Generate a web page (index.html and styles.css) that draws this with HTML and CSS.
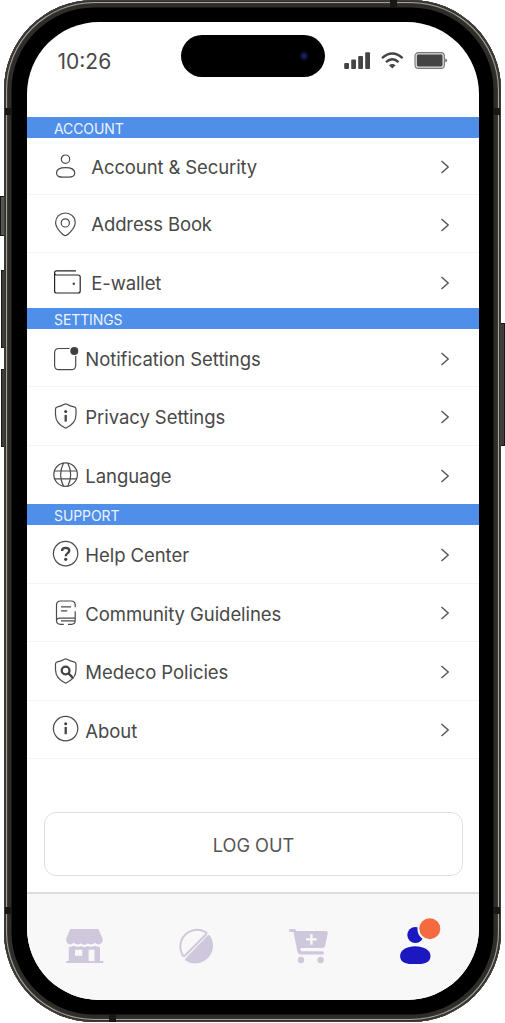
FILE: index.html
```html
<!DOCTYPE html>
<html lang="en">
<head>
<meta charset="utf-8">
<title>Settings</title>
<link rel="stylesheet" href="styles.css">
</head>
<body>
<div class="phone">
  <span class="key key-mute"></span>
  <span class="key key-up"></span>
  <span class="key key-down"></span>
  <span class="key key-power"></span>
  <div class="frame">
    <span class="band band-left-top"></span>
    <span class="band band-right-top"></span>
    <span class="band band-left-bottom"></span>
    <span class="band band-right-bottom"></span>
    <span class="band band-top"></span>
    <span class="band band-bottom"></span>
    <main class="screen">
      <header class="status">
        <span class="time">10:26</span>
        <span class="island"><span class="camera"></span></span>
        <svg class="signals" width="104" height="20" viewBox="0 0 104 20">
          <g fill="#444">
            <rect x="0.2" y="13" width="4.8" height="6" rx="1"/>
            <rect x="7.2" y="9.5" width="4.8" height="9.5" rx="1"/>
            <rect x="14.2" y="6" width="4.8" height="13" rx="1"/>
            <rect x="21.2" y="2.2" width="4.8" height="16.8" rx="1"/>
          </g>
          <g fill="none" stroke="#444" stroke-width="2.3">
            <path d="M38 8.2Q48.3-1.2 58.6 8.2"/>
            <path d="M42 12.2Q48.3 6.3 54.6 12.2"/>
          </g>
          <path fill="#444" d="M45 15.3Q48.3 12.6 51.6 15.3L48.3 18.6Z"/>
          <rect x="71" y="2.6" width="29.4" height="15.8" rx="3.4" fill="#dcdcdc" stroke="#777" stroke-width="1.1"/>
          <rect x="72.9" y="4.5" width="25.6" height="12" rx="1.4" fill="#444"/>
          <path fill="#666" d="M101.3 8.6Q103.1 9.2 103.1 10.6Q103.1 12 101.3 12.6Z"/>
        </svg>
      </header>

      <section class="group group-account">
        <h2 class="title">ACCOUNT</h2>
        <div class="row">
          <svg class="icon" viewBox="0 0 30 30"><circle cx="14.5" cy="8.2" r="4.2"/><path d="M14.6 16.7C19.5 16.7 23.8 18.2 23.8 22C23.8 25.4 20.8 26.2 17.5 26.2H11.8C8.5 26.2 5.5 25.4 5.5 22C5.5 18.2 9.8 16.7 14.6 16.7Z"/></svg>
          <span class="label">Account &amp; Security</span>
          <svg class="chevron" viewBox="0 0 10 14"><path d="M1.5 1L8.2 7L1.5 13"/></svg>
        </div>
        <div class="row">
          <svg class="icon" viewBox="0 0 30 30"><path d="M14.3 26.6C12.6 26.6 4.6 19.5 4.6 13.4C4.6 8 9 4 14.3 4S24.2 8 24.2 13.4C24.2 19.5 16 26.6 14.3 26.6Z"/><circle cx="14.3" cy="13.9" r="4.1"/></svg>
          <span class="label">Address Book</span>
          <svg class="chevron" viewBox="0 0 10 14"><path d="M1.5 1L8.2 7L1.5 13"/></svg>
        </div>
        <div class="row row-wallet">
          <svg class="icon icon-dark" viewBox="0 0 30 30"><path d="M25 4.9H5.5Q3.6 4.9 3.6 6.9T5.5 9H27Q29.2 9 29.2 11V25Q29.2 27 27 27H5.5Q3.6 27 3.6 25V6.9"/><circle class="solid" cx="22.8" cy="17.8" r="1.2"/></svg>
          <span class="label">E-wallet</span>
          <svg class="chevron" viewBox="0 0 10 14"><path d="M1.5 1L8.2 7L1.5 13"/></svg>
        </div>
      </section>

      <section class="group group-settings">
        <h2 class="title">SETTINGS</h2>
        <div class="row">
          <svg class="icon" viewBox="0 0 30 30"><path d="M18.5 5.5H8Q3.6 5.5 3.6 10V22.2Q3.6 26.7 8 26.7H20.3Q24.7 26.7 24.7 22.2V13"/><circle class="solid" cx="23.3" cy="8" r="4"/></svg>
          <span class="label">Notification Settings</span>
          <svg class="chevron" viewBox="0 0 10 14"><path d="M1.5 1L8.2 7L1.5 13"/></svg>
        </div>
        <div class="row">
          <svg class="icon" viewBox="0 0 30 30"><path d="M14.7 2.9Q15.3 2.9 16 3.3Q19.3 5.3 23 5.9Q25 6.3 25 8.3V13.6C25 20.5 21 24.5 14.7 27.2C8.4 24.5 4.5 20.5 4.5 13.6V8.3Q4.5 6.3 6.5 5.9Q10.1 5.3 13.4 3.3Q14.1 2.9 14.7 2.9Z"/><path class="bold" d="M14.7 13.9V20.6"/><circle class="solid" cx="14.7" cy="10.4" r="1.5"/></svg>
          <span class="label">Privacy Settings</span>
          <svg class="chevron" viewBox="0 0 10 14"><path d="M1.5 1L8.2 7L1.5 13"/></svg>
        </div>
        <div class="row">
          <svg class="icon" viewBox="0 0 30 30"><circle cx="14.6" cy="14.6" r="11.8"/><path d="M3.3 11H26M3.3 18.8H26M12.5 2.9Q6.8 14.6 12.5 26.3M16.8 2.9Q22.5 14.6 16.8 26.3"/></svg>
          <span class="label">Language</span>
          <svg class="chevron" viewBox="0 0 10 14"><path d="M1.5 1L8.2 7L1.5 13"/></svg>
        </div>
      </section>

      <section class="group group-support">
        <h2 class="title">SUPPORT</h2>
        <div class="row">
          <svg class="icon" viewBox="0 0 30 30"><circle cx="14.6" cy="14.6" r="12.2"/><path class="bold" d="M11 12C11 9.8 12.5 8.8 14.7 8.8S18.3 10 18.3 11.8C18.3 14.2 14.7 14 14.7 17.2"/><circle class="solid" cx="14.7" cy="20.3" r="1.6"/></svg>
          <span class="label">Help Center</span>
          <svg class="chevron" viewBox="0 0 10 14"><path d="M1.5 1L8.2 7L1.5 13"/></svg>
        </div>
        <div class="row">
          <svg class="icon" viewBox="0 0 30 30"><path d="M24.2 10.3V8Q24.2 4 20 4H9.7Q5.5 4 5.5 8V23.5Q5.5 27.3 9.5 27.3H12.8M24.2 14.3V21.2H8.8Q5.5 21.2 5.5 24M24.2 21.2V23.5Q24.2 27.3 20.5 27.3H17M10 23.9H23.5M10 9.8H20M10 13.8H16.3"/></svg>
          <span class="label">Community Guidelines</span>
          <svg class="chevron" viewBox="0 0 10 14"><path d="M1.5 1L8.2 7L1.5 13"/></svg>
        </div>
        <div class="row">
          <svg class="icon" viewBox="0 0 30 30"><path d="M22.2 21.9Q19.5 25 14.7 27.2C8.4 24.5 4.5 20.5 4.5 13.6V8.3Q4.5 6.3 6.5 5.9Q10.1 5.3 13.4 3.3Q14.7 2.5 16 3.3Q19.3 5.3 23 5.9Q25 6.3 25 8.3V13.6Q25 17.8 23.2 20.6"/><circle class="bold" cx="14.6" cy="14.5" r="3.9"/><path class="bold" d="M17.5 17.4L22.4 22.4"/></svg>
          <span class="label">Medeco Policies</span>
          <svg class="chevron" viewBox="0 0 10 14"><path d="M1.5 1L8.2 7L1.5 13"/></svg>
        </div>
        <div class="row">
          <svg class="icon" viewBox="0 0 30 30"><circle cx="14.6" cy="14.6" r="12.2"/><path class="bold" d="M14.7 12.9V20.2"/><circle class="solid" cx="14.7" cy="9.7" r="1.5"/></svg>
          <span class="label">About</span>
          <svg class="chevron" viewBox="0 0 10 14"><path d="M1.5 1L8.2 7L1.5 13"/></svg>
        </div>
      </section>

      <button class="logout">LOG OUT</button>

      <nav class="tabs">
        <svg class="tab" viewBox="0 0 44 44"><path d="M8.2 6H34.2Q35.3 6 35.8 7L39.5 15.3Q40.4 17.5 38.8 19.8Q35.3 23 32 19.8Q28.3 23 24.9 20.2Q21.4 23.3 17.9 20.2Q14.4 23 10.8 19.8Q7 23 4 19.8Q2.6 17.5 3.4 15.3L6.7 7Q7.2 6 8.2 6Z"/><path fill-rule="evenodd" d="M5.8 24Q8.6 24 10.8 22.8Q14.4 24.8 17.9 23Q21.4 25 24.9 23Q28.3 24.8 32 22.8Q34.5 24 37 24V38H40.3V40H3.2V38H5.8ZM12 26.7V32.8H19.3V26.7ZM25.6 26.7V38H31.5V26.7Z"/></svg>
        <svg class="tab" viewBox="0 0 44 44"><path class="outline" d="M9.8 32.4A16.8 16.8 0 0 1 32.6 9.1Q34 10.4 33 11.5L12 32.5Q10.8 33.6 9.8 32.4Z"/><path d="M36.8 12.4A17.8 17.8 0 0 1 12.3 37.4Q11.4 36.3 12.6 35.2L34.2 13Q35.8 11.4 36.8 12.4Z"/></svg>
        <svg class="tab" viewBox="0 0 44 44"><path fill-rule="evenodd" d="M7 6H11Q13 6 13.4 8H43Q45 8 44.8 10.2L42.2 22.2Q41.7 25 38.8 25H17.6Q16.5 26.8 18.5 28.3H39.6Q41 28.3 41 29.9T39.6 31.5H18.2Q15 31.5 14.4 28.5L10.5 9H7.5Q6 9 6 7.5T7 6ZM27.2 11.3V15.2H23V17.6H27.2V21.8H29.6V17.6H33.8V15.2H29.6V11.3Z"/><circle cx="18" cy="37" r="3.2"/><circle cx="37.6" cy="37" r="3.2"/></svg>
        <svg class="tab tab-active" viewBox="0 0 44 44"><circle cx="22.4" cy="12" r="8.1"/><path d="M22.2 23.2C30 23.2 37.5 26.6 37.5 33C37.5 39.2 32 41 26.2 41H18.2C12.5 41 7.1 39.2 7.1 33C7.1 26.6 14.2 23.2 22.2 23.2Z"/><circle cx="36.8" cy="5.7" r="12.4" fill="#f8f8f8"/><circle cx="36.8" cy="5.7" r="10.5" fill="#f56b3f"/></svg>
      </nav>
    </main>
  </div>
</div>
</body>
</html>
```
FILE: styles.css
```css
* { box-sizing: border-box; }
body {
  margin: 0;
  background: #fff;
  font-family: Inter, "Liberation Sans", sans-serif;
  color: #484848;
}
.phone { position: relative; width: 505px; height: 1023px; overflow: hidden; padding-left: 4px; }
.frame {
  position: relative;
  width: 497px;
  height: 1022px;
  padding: 22px 22.5px 22px 23px;
  border-radius: 90px;
  background: #000;
  box-shadow:
    inset 0 0 0 1px #3c3c3a,
    inset 0 0 0 2px #33322f,
    inset 0 0 0 3px #a7a198,
    inset 0 0 0 3.6px #45433f,
    inset 0 0 0 7.5px #2d2d2a;
}
/* side keys sit against the edges of the case */
.key { position: absolute; background: #3c3e3b; border: 1px solid #161716; }
.key-mute { left: 0; top: 196px; width: 6px; height: 40px; background: #555754; }
.key-up { left: 1px; top: 270px; width: 5px; height: 78px; }
.key-down { left: 1px; top: 369px; width: 5px; height: 78px; }
.key-power { left: 500px; top: 323px; width: 5px; height: 123px; }
.band { position: absolute; width: 7px; height: 7px; background: #181715; }
.band-left-top { left: 1px; top: 108px; }
.band-right-top { right: 1px; top: 108px; }
.band-left-bottom { left: 1px; top: 907px; }
.band-right-bottom { right: 1px; top: 907px; }
.band-top { left: 385.5px; top: 0; }
.band-bottom { left: 105px; bottom: 0; }
.screen {
  display: flex;
  flex-direction: column;
  height: 978px;
  overflow: hidden;
  border-radius: 72px;
  background: #fff;
}
.status { display: flex; height: 95.3px; padding: 13px 0 0 30.5px; flex: none; }
.time { width: 123.5px; padding-top: 14px; font-size: 21px; line-height: 26px; }
.island {
  display: flex;
  align-items: center;
  justify-content: flex-end;
  width: 144px;
  height: 42px;
  padding-right: 16px;
  border-radius: 21px;
  background: #000;
}
.camera { width: 10px; height: 10px; border-radius: 50%; background: radial-gradient(#23236c 0 12%, #0b0b2b 45%, #05050c 75%); }
.signals { margin: 15px 0 0 18.5px; }
.group { flex: none; }
.title {
  height: 20.7px;
  margin: 0;
  padding-left: 27px;
  background: #4f8ee9;
  color: #edf4ff;
  font-size: 14px;
  font-weight: 400;
  letter-spacing: -0.1px;
  line-height: 23px;
}
.row {
  display: flex;
  align-items: center;
  height: 58.5px;
  padding: 0 29px 0 24px;
  border-bottom: 1.5px solid #f3f3f3;
}
.icon, .chevron { flex: none; fill: none; stroke: #4b4b4b; stroke-width: 1.2; }
.icon { width: 30px; height: 30px; }
.icon-dark { stroke: #242424; }
.icon .solid { fill: #3f3f3f; stroke: none; }
.icon .bold { stroke: #444; stroke-width: 2.3; }
.chevron { width: 10px; height: 14px; margin-top: 2px; stroke: #555; stroke-width: 1.4; }
.label {
  flex: 1;
  padding: 2px 0 0 4.3px;
  font-size: 18.5px;
  letter-spacing: -0.06px;
  line-height: 24px;
  white-space: nowrap;
}
.group-support .label { padding-top: 3px; }
.group-account .row { height: 57.5px; }
.group-account .label { padding-left: 10.3px; padding-top: 1px; letter-spacing: -0.12px; }
.group-account .row-wallet { height: 55.3px; border: 0; }
.group-account .row-wallet .label { padding-top: 5px; }
.row-wallet .chevron { margin-top: 5px; }
.group-settings .row:last-child { border: 0; }
.logout {
  flex: none;
  width: 419px;
  height: 64px;
  margin: 53px 0 0 17px;
  padding: 1px 0 0;
  border: 1.5px solid #dfdfdf;
  border-radius: 12px;
  background: #fff;
  color: #555;
  font: 18.2px Inter, "Liberation Sans", sans-serif;
}
.tabs {
  display: flex;
  justify-content: space-between;
  flex: 1;
  margin-top: 16px;
  padding: 29px 41px 0 35.5px;
  border-top: 2px solid #dcdcdc;
  background: #f8f8f8;
}
.tab { width: 44px; height: 44px; overflow: visible; fill: #cfc7dc; }
.tab .outline { fill: none; stroke: #cfc7dc; stroke-width: 2; }
.tab-active { fill: #1b18c1; }
```
